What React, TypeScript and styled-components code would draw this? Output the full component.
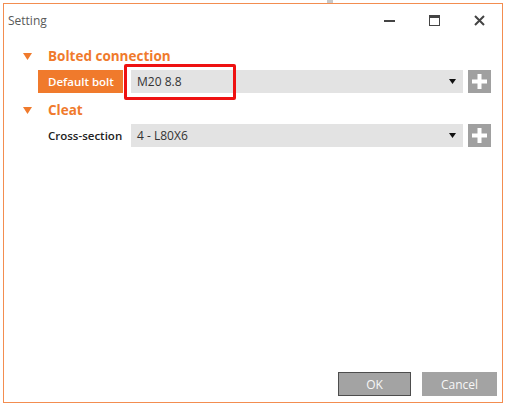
import React from 'react'
import styled, { createGlobalStyle } from 'styled-components'

const GlobalStyle = createGlobalStyle`
    html, body {
        margin: 0;
        padding: 0;
        background: #ffffff;
        font-family: 'Open Sans', 'Noto Sans', 'Liberation Sans', sans-serif;
    }
`

const orange = '#f07a2c'

const Desk = styled.div`
    width: 506px;
    height: 404px;
    position: relative;
    overflow: hidden;
    background: #ffffff;
`

const BehindBar = styled.div`
    position: absolute;
    top: 0;
    left: 327px;
    width: 6px;
    height: 3px;
    background: #c8c8c8;
`

const Window = styled.div`
    position: absolute;
    left: 3px;
    top: 3px;
    width: 500px;
    height: 400px;
    box-sizing: border-box;
    border: 1px solid #f38d50;
    display: flex;
    flex-direction: column;
    background: #ffffff;
`

const TitleBar = styled.div`
    height: 32px;
    display: flex;
    align-items: center;
    padding-left: 4px;
`

const Title = styled.span`
    flex: 1;
    font-size: 12px;
    color: #595959;
`

const WinButton = styled.div`
    width: 45px;
    height: 32px;
    display: flex;
    align-items: center;
    justify-content: center;
`

const Content = styled.div`
    flex: 1;
    padding: 10px 11px 0 18px;
    display: flex;
    flex-direction: column;
`

const SectionHeader = styled.div`
    height: 20px;
    display: flex;
    align-items: center;
    margin-bottom: 4px;
`

const Caret = styled.svg`
    width: 9px;
    height: 7px;
    margin-left: 1px;
    margin-right: 16px;
`

const SectionTitle = styled.span`
    font-size: 13.5px;
    font-weight: 700;
    color: ${orange};
    white-space: nowrap;
`

const Row = styled.div<{ $gap?: number }>`
    height: 23px;
    display: flex;
    align-items: stretch;
    padding-left: 16px;
    margin-bottom: ${({ $gap }) => $gap ?? 0}px;
`

const Label = styled.div<{ $active?: boolean }>`
    width: 85px;
    margin-right: 8px;
    display: flex;
    align-items: center;
    padding-left: 10px;
    box-sizing: border-box;
    font-size: 11.5px;
    font-weight: 600;
    white-space: nowrap;
    color: ${({ $active }) => ($active ? '#ffffff' : '#222222')};
    background: ${({ $active }) => ($active ? orange : 'transparent')};
`

const Select = styled.div`
    flex: 1;
    position: relative;
    display: flex;
    align-items: center;
    background: #e3e3e3;
    padding: 0 6px;
    font-size: 12px;
    color: #333333;
`

const SelectText = styled.span`
    flex: 1;
`

const Highlight = styled.div`
    position: absolute;
    left: -7px;
    top: -6px;
    width: 112px;
    height: 36px;
    box-sizing: border-box;
    border: 3px solid #ee1111;
    border-radius: 2px;
`

const AddButton = styled.div`
    width: 23px;
    margin-left: 5px;
    background: #a0a0a0;
    display: flex;
    align-items: center;
    justify-content: center;
`

const Footer = styled.div`
    display: flex;
    justify-content: flex-end;
    gap: 11px;
    padding: 0 5px 6px 0;
`

const DialogButton = styled.button<{ $default?: boolean; $w: number }>`
    width: ${({ $w }) => $w}px;
    height: 24px;
    box-sizing: border-box;
    background: #a3a3a3;
    border: 1px solid ${({ $default }) => ($default ? '#4d4d4d' : '#a3a3a3')};
    color: #f7f7f7;
    font-family: inherit;
    font-size: 12px;
    padding: 0;
`

function Triangle() {
    return (
        <Caret viewBox="0 0 9 7">
            <polygon points="0,0 9,0 4.5,7" fill={orange} />
        </Caret>
    )
}

function Plus() {
    return (
        <svg width="17" height="17" viewBox="0 0 17 17">
            <rect x="6.5" y="1" width="4" height="15" fill="#ffffff" />
            <rect x="1" y="6.5" width="15" height="4" fill="#ffffff" />
        </svg>
    )
}

function DropArrow() {
    return (
        <svg width="7" height="5" viewBox="0 0 7 5" style={{ marginRight: 1 }}>
            <polygon points="0,0 7,0 3.5,5" fill="#111111" />
        </svg>
    )
}

export default function App() {
    return (
        <>
            <GlobalStyle />
            <Desk>
                <BehindBar />
                <Window>
                    <TitleBar>
                        <Title>Setting</Title>
                        <WinButton>
                            <svg width="11" height="11" viewBox="0 0 11 11">
                                <rect x="0" y="5" width="11" height="2" fill="#444" />
                            </svg>
                        </WinButton>
                        <WinButton>
                            <svg width="11" height="11" viewBox="0 0 11 11">
                                <rect x="0.5" y="0.5" width="10" height="10" fill="none" stroke="#444" />
                                <rect x="0" y="0" width="11" height="3" fill="#444" />
                            </svg>
                        </WinButton>
                        <WinButton>
                            <svg width="11" height="11" viewBox="0 0 11 11">
                                <path d="M1 1 L10 10 M10 1 L1 10" stroke="#444" strokeWidth="2" />
                            </svg>
                        </WinButton>
                    </TitleBar>
                    <Content>
                        <SectionHeader>
                            <Triangle />
                            <SectionTitle>Bolted connection</SectionTitle>
                        </SectionHeader>
                        <Row $gap={7}>
                            <Label $active>Default bolt</Label>
                            <Select>
                                <SelectText>M20 8.8</SelectText>
                                <DropArrow />
                                <Highlight />
                            </Select>
                            <AddButton>
                                <Plus />
                            </AddButton>
                        </Row>
                        <SectionHeader>
                            <Triangle />
                            <SectionTitle>Cleat</SectionTitle>
                        </SectionHeader>
                        <Row>
                            <Label>Cross-section</Label>
                            <Select>
                                <SelectText>4 - L80X6</SelectText>
                                <DropArrow />
                            </Select>
                            <AddButton>
                                <Plus />
                            </AddButton>
                        </Row>
                    </Content>
                    <Footer>
                        <DialogButton $default $w={73}>OK</DialogButton>
                        <DialogButton $w={75}>Cancel</DialogButton>
                    </Footer>
                </Window>
            </Desk>
        </>
    )
}
